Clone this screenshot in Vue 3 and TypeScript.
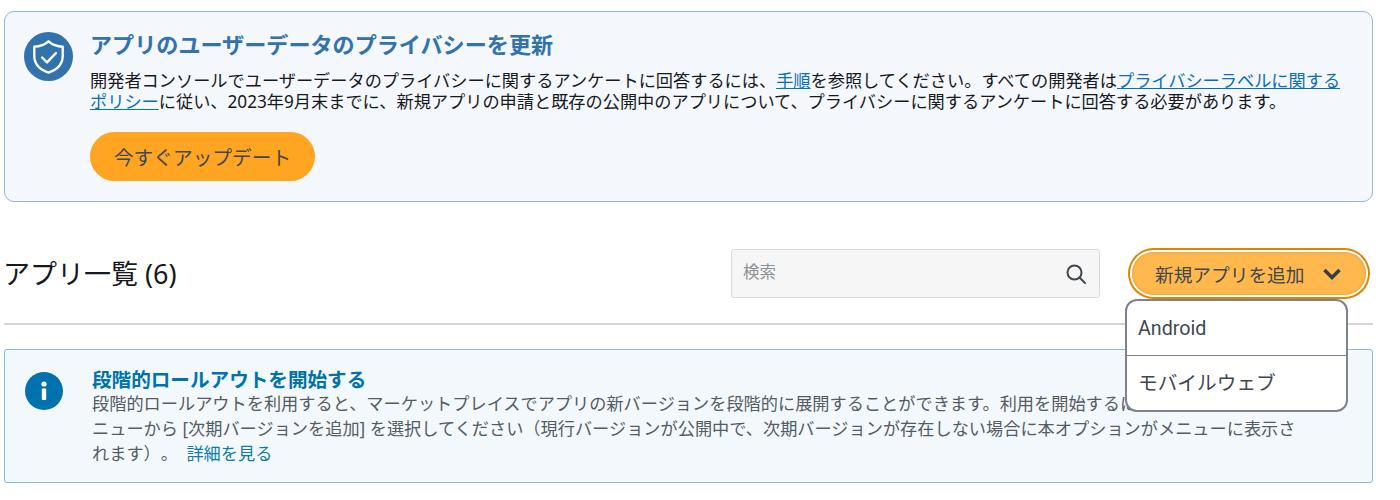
<template>
  <div class="page">
    <section class="notice privacy">
      <div class="badge shield">
        <svg width="50" height="50" viewBox="0 0 50 50" fill="none" stroke="#fff">
          <path d="M25 9 C29 12.5 34 14.2 39.5 14.5 V24 C39.5 32.5 33.5 38 25 41 C16.5 38 10.5 32.5 10.5 24 V14.5 C16 14.2 21 12.5 25 9 Z" stroke-width="2.4" stroke-linejoin="round" />
          <path d="M18.5 25.5 L23.5 30.5 L32.5 21" stroke-width="2.4" stroke-linecap="round" stroke-linejoin="round" />
        </svg>
      </div>
      <div class="notice-body">
        <h2 class="privacy-title">アプリのユーザーデータのプライバシーを更新</h2>
        <p class="privacy-text">
          開発者コンソールでユーザーデータのプライバシーに関するアンケートに回答するには、<a href="#">手順</a>を参照してください。すべての開発者は<a href="#">プライバシーラベルに関するポリシー</a>に従い、2023年9月末までに、新規アプリの申請と既存の公開中のアプリについて、プライバシーに関するアンケートに回答する必要があります。
        </p>
        <button class="update-btn">今すぐアップデート</button>
      </div>
    </section>

    <header class="list-head">
      <h1 class="list-title">アプリ一覧 (6)</h1>
      <div class="search">
        <span class="placeholder">検索</span>
        <svg width="24" height="24" viewBox="0 0 24 24" fill="none" stroke="#414750" stroke-width="2">
          <circle cx="10.5" cy="10.5" r="7" />
          <path d="M15.5 15.5 L21 21" stroke-linecap="round" />
        </svg>
      </div>
      <div class="add-wrap">
        <button class="add-btn">
          新規アプリを追加
          <svg width="20" height="12" viewBox="0 0 20 12" fill="none" stroke="#333b47" stroke-width="3.4">
            <path d="M2.5 2 L10 9.5 L17.5 2" />
          </svg>
        </button>
        <ul class="menu">
          <li v-for="item in menuItems" :key="item">{{ item }}</li>
        </ul>
      </div>
    </header>

    <section class="notice rollout">
      <div class="info">
        <svg width="38" height="38" viewBox="0 0 38 38">
          <circle cx="19" cy="19" r="19" fill="#0073ae" />
          <circle cx="19" cy="12" r="2.6" fill="#fff" />
          <rect x="16.8" y="16.5" width="4.4" height="11.5" rx="1" fill="#fff" />
        </svg>
      </div>
      <div class="notice-body">
        <h3 class="rollout-title">段階的ロールアウトを開始する</h3>
        <p class="rollout-text">
          段階的ロールアウトを利用すると、マーケットプレイスでアプリの新バージョンを段階的に展開することができます。利用を開始するには、アプリの操作メニューから [次期バージョンを追加] を選択してください（現行バージョンが公開中で、次期バージョンが存在しない場合に本オプションがメニューに表示されます）。 <a href="#">詳細を見る</a>
        </p>
      </div>
    </section>
  </div>
</template>

<script setup lang="ts">
const menuItems: string[] = ['Android', 'モバイルウェブ']
</script>

<style>
html, body {
  margin: 0;
  background: #fff;
}
</style>

<style scoped>
.page {
  width: 1369px;
  padding: 11px 0 0 4px;
  font-family: "Noto Sans", "Noto Sans CJK JP", sans-serif;
  text-spacing-trim: space-all;
}
.notice {
  display: flex;
  box-sizing: border-box;
}
.privacy {
  height: 191px;
  padding: 20px 28px 0 19px;
  gap: 17px;
  background: #f4f7fb;
  border: 1px solid #93b6d9;
  border-radius: 10px;
}
.shield {
  flex: none;
  width: 49px;
  height: 49px;
  border-radius: 50%;
  background: #3273ad;
  display: flex;
  align-items: center;
  justify-content: center;
}
.privacy-title {
  margin: -2px 0 0;
  font-size: 22.1px;
  line-height: 28px;
  font-weight: 700;
  color: #3273ad;
}
.privacy-text {
  margin: 12px 0 20px;
  font-size: 17.2px;
  line-height: 21px;
  color: #16191f;
}
.privacy-text a {
  color: #0a6ebd;
  text-decoration: underline;
}
.update-btn {
  display: block;
  width: 225px;
  height: 49px;
  border: none;
  border-radius: 25px;
  background: #ffa521;
  color: #414750;
  font: inherit;
  font-size: 19.7px;
}
.list-head {
  display: flex;
  align-items: center;
  height: 123px;
  margin-bottom: 24px;
  border-bottom: 2px solid #d5d5d5;
  box-sizing: border-box;
  padding: 24px 0 2px;
}
.list-title {
  margin: -2px 0 0 -1px;
  flex: 1;
  font-size: 27px;
  font-weight: 400;
  color: #16191f;
}
.search {
  display: flex;
  align-items: center;
  justify-content: space-between;
  box-sizing: border-box;
  width: 369px;
  height: 49px;
  padding: 0 11px;
  background: #f6f6f6;
  border: 1px solid #d5dbdb;
  border-radius: 3px;
}
.placeholder {
  font-size: 16.5px;
  color: #8c9196;
  margin-top: -6px;
}
.add-wrap {
  position: relative;
  margin-left: 32px;
  margin-right: 7px;
}
.add-btn {
  display: flex;
  align-items: center;
  justify-content: space-between;
  box-sizing: border-box;
  width: 234px;
  height: 43px;
  padding: 0 24px 0 23px;
  border: none;
  border-radius: 22px;
  background: #ffb84d;
  box-shadow: inset 0 0 3px #e0902a, 0 0 0 2px #fff, 0 0 0 4px #dd8500;
  color: #414750;
  font: inherit;
  font-size: 18.7px;
}
.menu {
  position: absolute;
  top: 47px;
  left: -7px;
  width: 223px;
  margin: 0;
  padding: 0;
  list-style: none;
  box-sizing: border-box;
  background: #fff;
  border: 2px solid #7d8290;
  border-radius: 12px;
  z-index: 2;
  overflow: hidden;
}
.menu li {
  height: 54px;
  line-height: 55px;
  padding-left: 11px;
  font-family: Roboto, "Noto Sans CJK JP", sans-serif;
  font-size: 19.7px;
  color: #414750;
}
.menu li + li {
  height: 54px;
  border-top: 1px solid #7d8290;
}
.rollout {
  height: 134px;
  padding: 22px 67px 0 20px;
  gap: 21px;
  background: #f3f8fc;
  border: 1px solid #85bcdc;
  border-radius: 3px;
}
.info {
  flex: none;
  width: 46px;
}
.rollout-title {
  margin: 0;
  font-size: 19.6px;
  line-height: 13px;
  padding-top: 1px;
  font-weight: 700;
  color: #0073ae;
}
.rollout-text {
  margin: 5px 0 0;
  font-size: 17.2px;
  line-height: 25px;
  color: #545b64;
}
.rollout-text a {
  color: #0f7ba8;
  text-decoration: none;
  margin-left: 4px;
}
</style>
